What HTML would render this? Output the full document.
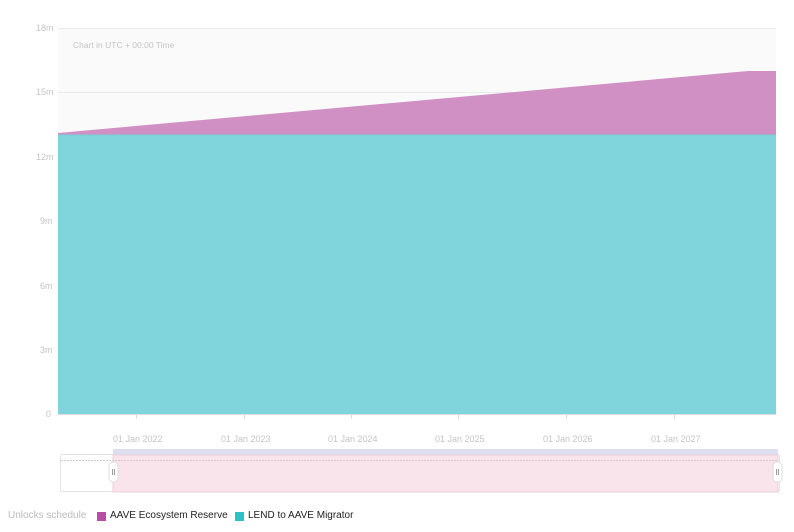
<!DOCTYPE html>
<html><head><style>
body{margin:0;width:794px;height:532px;background:#fff;font-family:"Liberation Sans",sans-serif;position:relative;overflow:hidden}
.t{position:absolute;font-size:9px;color:#c4c4c4}
</style></head><body>
<svg width="794" height="532" style="position:absolute;left:0;top:0">
<rect x="58" y="28" width="718" height="386" fill="#fafafa"/>
<g stroke="#ebebeb" stroke-width="1">
<line x1="58" y1="28.5" x2="776" y2="28.5"/><line x1="58" y1="92.5" x2="776" y2="92.5"/>
<line x1="58" y1="157.5" x2="776" y2="157.5"/><line x1="58" y1="221.5" x2="776" y2="221.5"/>
<line x1="58" y1="286.5" x2="776" y2="286.5"/><line x1="58" y1="350.5" x2="776" y2="350.5"/>
</g>
<polygon points="58,133 748,71 776,71 776,135 58,135" fill="#d090c3"/>
<rect x="58" y="135" width="718" height="280" fill="#80d4dc"/>
<line x1="58" y1="135" x2="776" y2="135" stroke="#76ced6"/>
<g stroke="#ddd"><line x1="58" y1="414.5" x2="776" y2="414.5"/>
<line x1="136.5" y1="414" x2="136.5" y2="419"/><line x1="244.5" y1="414" x2="244.5" y2="419"/>
<line x1="351.5" y1="414" x2="351.5" y2="419"/><line x1="458.5" y1="414" x2="458.5" y2="419"/>
<line x1="566.5" y1="414" x2="566.5" y2="419"/><line x1="674.5" y1="414" x2="674.5" y2="419"/></g>
<rect x="60.5" y="454.5" width="719" height="37" fill="#fff" stroke="#e4e4e4" rx="2"/>
<rect x="113" y="449" width="665" height="6" fill="#dcdff0"/>
<rect x="113" y="455" width="665" height="37" fill="#f8e4ea" stroke="#ebcfd6"/>
<line x1="61" y1="460.5" x2="778" y2="460.5" stroke="#d8c8cc" stroke-dasharray="2,1"/>
<rect x="109" y="462" width="9" height="20" rx="4" fill="#fff" stroke="#ddd"/>
<line x1="112.5" y1="469" x2="112.5" y2="475" stroke="#999"/><line x1="114.5" y1="469" x2="114.5" y2="475" stroke="#999"/>
<rect x="773" y="462" width="9" height="20" rx="4" fill="#fff" stroke="#ddd"/>
<line x1="776.5" y1="469" x2="776.5" y2="475" stroke="#999"/><line x1="778.5" y1="469" x2="778.5" y2="475" stroke="#999"/>
<rect x="97" y="512" width="9" height="9" fill="#b84ea3"/>
<rect x="235" y="512" width="9" height="9" fill="#2ebfc8"/>
</svg>
<div class="t" style="left:36px;top:23px">18m</div>
<div class="t" style="left:36px;top:87px">15m</div>
<div class="t" style="left:36px;top:152px">12m</div>
<div class="t" style="left:40px;top:216px">9m</div>
<div class="t" style="left:40px;top:281px">6m</div>
<div class="t" style="left:40px;top:345px">3m</div>
<div class="t" style="left:46px;top:409px">0</div>
<div class="t" style="left:73px;top:40px;font-size:8.5px">Chart in UTC + 00:00 Time</div>
<div class="t" style="left:113px;top:434px">01 Jan 2022</div>
<div class="t" style="left:221px;top:434px">01 Jan 2023</div>
<div class="t" style="left:328px;top:434px">01 Jan 2024</div>
<div class="t" style="left:435px;top:434px">01 Jan 2025</div>
<div class="t" style="left:543px;top:434px">01 Jan 2026</div>
<div class="t" style="left:651px;top:434px">01 Jan 2027</div>
<div style="position:absolute;left:8px;top:510px;font-size:10px;color:#bbb">Unlocks schedule</div>
<div style="position:absolute;left:110px;top:510px;font-size:10px;color:#222">AAVE Ecosystem Reserve</div>
<div style="position:absolute;left:248px;top:510px;font-size:10px;color:#222">LEND to AAVE Migrator</div>
</body></html>
